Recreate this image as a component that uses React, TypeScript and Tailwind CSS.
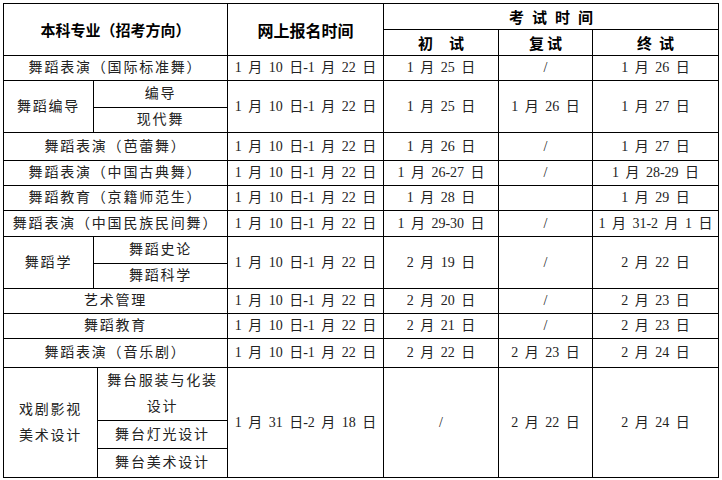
const body = "font-['Liberation_Serif','Noto_Sans_CJK_SC',serif]";

function Cell({
  children,
  rowSpan,
  colSpan,
  className = '',
}: {
  children?: React.ReactNode;
  rowSpan?: number;
  colSpan?: number;
  className?: string;
}) {
  return (
    <td
      rowSpan={rowSpan}
      colSpan={colSpan}
      className={`border border-black p-0 text-center align-middle text-[14px] leading-[18px] text-[#222] [word-spacing:3px] ${className}`}
    >
      {children}
    </td>
  );
}

const HEAD = "font-['Noto_Sans_CJK_SC',sans-serif] font-bold text-[15px] text-black";
const CN = 'tracking-[1.8px]';
const REG = '1 月 10 日-1 月 22 日';

type Row = { name: string; h: string; first: string; second: string; final: string };

const simpleRows: Row[] = [
  { name: '舞蹈表演（芭蕾舞）', h: 'h-[28px]', first: '1 月 26 日', second: '/', final: '1 月 27 日' },
  { name: '舞蹈表演（中国古典舞）', h: 'h-[25px]', first: '1 月 26-27 日', second: '/', final: '1 月 28-29 日' },
  { name: '舞蹈教育（京籍师范生）', h: 'h-[25px]', first: '1 月 28 日', second: '', final: '1 月 29 日' },
  { name: '舞蹈表演（中国民族民间舞）', h: 'h-[26px]', first: '1 月 29-30 日', second: '/', final: '1 月 31-2 月 1 日' },
];

const laterRows: Row[] = [
  { name: '艺术管理', h: 'h-[25px]', first: '2 月 20 日', second: '/', final: '2 月 23 日' },
  { name: '舞蹈教育', h: 'h-[25px]', first: '2 月 21 日', second: '/', final: '2 月 23 日' },
  { name: '舞蹈表演（音乐剧）', h: 'h-[29px]', first: '2 月 22 日', second: '2 月 23 日', final: '2 月 24 日' },
];

function SimpleRow({ r }: { r: Row }) {
  return (
    <tr className={r.h}>
      <Cell colSpan={3} className={CN}>{r.name}</Cell>
      <Cell>{REG}</Cell>
      <Cell>{r.first}</Cell>
      <Cell>{r.second}</Cell>
      <Cell>{r.final}</Cell>
    </tr>
  );
}

export default function App() {
  return (
    <div className={`w-[722px] h-[480px] bg-white pl-[3px] pt-[3px] ${body}`}>
      <table className="table-fixed border-collapse w-[715px]">
        <colgroup>
          <col className="w-[90px]" />
          <col className="w-[4px]" />
          <col className="w-[130px]" />
          <col className="w-[156px]" />
          <col className="w-[115px]" />
          <col className="w-[94px]" />
          <col className="w-[126px]" />
        </colgroup>
        <tbody>
          {/* 表头 */}
          <tr className="h-[26px]">
            <Cell rowSpan={2} colSpan={3} className={HEAD}>本科专业（招考方向）</Cell>
            <Cell rowSpan={2} className={`${HEAD} text-[16px]`}>网上报名时间</Cell>
            <Cell colSpan={3} className={`${HEAD} tracking-[8px] pl-[8px]`}>考试时间</Cell>
          </tr>
          <tr className="h-[26px]">
            <Cell className={`${HEAD} tracking-[16px] pl-[16px]`}>初试</Cell>
            <Cell className={`${HEAD} tracking-[3px] pl-[3px]`}>复试</Cell>
            <Cell className={`${HEAD} tracking-[7px] pl-[7px]`}>终试</Cell>
          </tr>

          <tr className="h-[25px]">
            <Cell colSpan={3} className={CN}>舞蹈表演（国际标准舞）</Cell>
            <Cell>{REG}</Cell>
            <Cell>1 月 25 日</Cell>
            <Cell>/</Cell>
            <Cell>1 月 26 日</Cell>
          </tr>

          {/* 舞蹈编导 */}
          <tr className="h-[27px]">
            <Cell rowSpan={2} className={CN}>舞蹈编导</Cell>
            <Cell colSpan={2} className={CN}>编导</Cell>
            <Cell rowSpan={2}>{REG}</Cell>
            <Cell rowSpan={2}>1 月 25 日</Cell>
            <Cell rowSpan={2}>1 月 26 日</Cell>
            <Cell rowSpan={2}>1 月 27 日</Cell>
          </tr>
          <tr className="h-[25px]">
            <Cell colSpan={2} className={CN}>现代舞</Cell>
          </tr>

          {simpleRows.map((r) => (
            <SimpleRow key={r.name} r={r} />
          ))}

          {/* 舞蹈学 */}
          <tr className="h-[27px]">
            <Cell rowSpan={2} className={CN}>舞蹈学</Cell>
            <Cell colSpan={2} className={CN}>舞蹈史论</Cell>
            <Cell rowSpan={2}>{REG}</Cell>
            <Cell rowSpan={2}>2 月 19 日</Cell>
            <Cell rowSpan={2}>/</Cell>
            <Cell rowSpan={2}>2 月 22 日</Cell>
          </tr>
          <tr className="h-[25px]">
            <Cell colSpan={2} className={CN}>舞蹈科学</Cell>
          </tr>

          {laterRows.map((r) => (
            <SimpleRow key={r.name} r={r} />
          ))}

          {/* 戏剧影视美术设计 */}
          <tr className="h-[51px]">
            <Cell rowSpan={3} colSpan={2} className={`${CN} leading-[26px]`}>
              戏剧影视
              <br />
              美术设计
            </Cell>
            <Cell className={`${CN} leading-[26px]`}>
              舞台服装与化装
              <br />
              设计
            </Cell>
            <Cell rowSpan={3}>1 月 31 日-2 月 18 日</Cell>
            <Cell rowSpan={3}>/</Cell>
            <Cell rowSpan={3}>2 月 22 日</Cell>
            <Cell rowSpan={3}>2 月 24 日</Cell>
          </tr>
          <tr className="h-[28px]">
            <Cell className={CN}>舞台灯光设计</Cell>
          </tr>
          <tr className="h-[29px]">
            <Cell className={CN}>舞台美术设计</Cell>
          </tr>
        </tbody>
      </table>
    </div>
  );
}
